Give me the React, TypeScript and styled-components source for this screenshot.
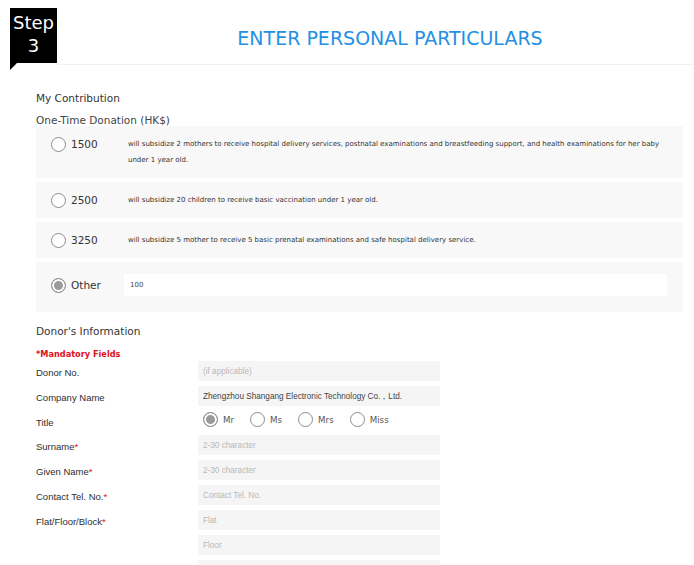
import React from 'react';
import styled, { createGlobalStyle } from 'styled-components';

interface DonationOption {
  amount: string;
  text: string;
}

const options: DonationOption[] = [
  {
    amount: '1500',
    text: 'will subsidize 2 mothers to receive hospital delivery services, postnatal examinations and breastfeeding support, and health examinations for her baby under 1 year old.',
  },
  {
    amount: '2500',
    text: 'will subsidize 20 children to receive basic vaccination under 1 year old.',
  },
  {
    amount: '3250',
    text: 'will subsidize 5 mother to receive 5 basic prenatal examinations and safe hospital delivery service.',
  },
];

interface Field {
  label?: string;
  required?: boolean;
  placeholder?: string;
  value?: string;
}

const fieldsBefore: Field[] = [
  { label: 'Donor No.', placeholder: '(if applicable)' },
  { label: 'Company Name', value: 'Zhengzhou Shangang Electronic Technology Co.，Ltd.' },
];

const fieldsAfter: Field[] = [
  { label: 'Surname', required: true, placeholder: '2-30 character' },
  { label: 'Given Name', required: true, placeholder: '2-30 character' },
  { label: 'Contact Tel. No.', required: true, placeholder: 'Contact Tel. No.' },
  { label: 'Flat/Floor/Block', required: true, placeholder: 'Flat' },
  { placeholder: 'Floor' },
  { placeholder: 'Block' },
];

const titles = ['Mr', 'Ms', 'Mrs', 'Miss'];

const App: React.FC = () => {
  const renderField = (f: Field, i: number) => (
    <React.Fragment key={`${f.label}-${i}`}>
      <Label>
        {f.label}
        {f.required && <Star>*</Star>}
      </Label>
      <TextInput placeholder={f.placeholder} defaultValue={f.value} />
    </React.Fragment>
  );

  return (
    <Page>
      <GlobalStyle />
      <Header>
        <StepBadge>
          Step
          <br />3
        </StepBadge>
        <TitleBar>
          <PageTitle>ENTER PERSONAL PARTICULARS</PageTitle>
        </TitleBar>
      </Header>

      <Content>
        <SectionHeading>My Contribution</SectionHeading>
        <SubHeading>One-Time Donation (HK$)</SubHeading>

        <OptionList>
          {options.map((o) => (
            <OptionRow key={o.amount}>
              <OptionLabel>
                <Radio type="radio" name="amount" />
                <Amount>{o.amount}</Amount>
              </OptionLabel>
              <OptionText>{o.text}</OptionText>
            </OptionRow>
          ))}
          <OptionRow $other>
            <OptionLabel $narrow>
              <Radio type="radio" name="amount" defaultChecked />
              <Amount>Other</Amount>
            </OptionLabel>
            <OtherInput defaultValue="100" />
          </OptionRow>
        </OptionList>

        <SectionHeading $gap={12}>Donor's Information</SectionHeading>
        <Mandatory>*Mandatory Fields</Mandatory>

        <FormGrid>
          {fieldsBefore.map(renderField)}
          <Label>Title</Label>
          <TitleGroup>
            {titles.map((t, i) => (
              <TitleOption key={t}>
                <Radio type="radio" name="title" defaultChecked={i === 0} />
                {t}
              </TitleOption>
            ))}
          </TitleGroup>
          {fieldsAfter.map(renderField)}
        </FormGrid>
      </Content>
    </Page>
  );
};

const GlobalStyle = createGlobalStyle`
  body {
    margin: 0;
    background: #fff;
    font-family: "DejaVu Sans", Verdana, sans-serif;
  }
`;

const Page = styled.div`
  width: 694px;
  height: 565px;
  overflow: hidden;
`;

const Header = styled.div`
  display: flex;
  align-items: flex-start;
`;

const StepBadge = styled.div`
  position: relative;
  margin: 8px 0 0 10px;
  width: 47px;
  height: 55px;
  box-sizing: border-box;
  padding-top: 3px;
  background: #000;
  color: #fff;
  font-size: 18px;
  line-height: 23px;
  text-align: center;

  &::after {
    content: '';
    position: absolute;
    left: 0;
    top: 100%;
    width: 0;
    height: 0;
    border-top: 7px solid #000;
    border-right: 7px solid transparent;
  }
`;

const TitleBar = styled.div`
  flex: 1;
  height: 65px;
  border-bottom: 1px solid #f1f1f1;
  display: flex;
  align-items: center;
  justify-content: center;
  padding: 12px 0 0 29px;
  box-sizing: border-box;
`;

const PageTitle = styled.h1`
  margin: 0;
  font-size: 19px;
  font-weight: normal;
  color: #2490e4;
`;

const Content = styled.div`
  padding: 0 11px 0 36px;
`;

const SectionHeading = styled.div<{ $gap?: number }>`
  margin-top: ${(p) => p.$gap ?? 26}px;
  font-size: 10.5px;
  line-height: 14px;
  color: #333;
`;

const SubHeading = styled.div`
  margin-top: 9px;
  font-size: 10.5px;
  line-height: 12px;
  color: #444;
`;

const OptionList = styled.div`
  display: flex;
  flex-direction: column;
  gap: 4px;
`;

const OptionRow = styled.div<{ $other?: boolean }>`
  display: flex;
  align-items: ${(p) => (p.$other ? 'center' : 'flex-start')};
  padding: ${(p) => (p.$other ? '12px 16px 16px 15px' : '10px 10px 10px 15px')};
  background: #f8f8f8;
`;

const OptionLabel = styled.label<{ $narrow?: boolean }>`
  display: flex;
  align-items: center;
  flex: none;
  width: ${(p) => (p.$narrow ? 73 : 77)}px;
  height: 16px;
`;

const Radio = styled.input`
  appearance: none;
  flex: none;
  width: 15px;
  height: 15px;
  margin: 0 5px 0 0;
  border: 1.5px solid #8c8c8c;
  border-radius: 50%;
  background: #fff;
  box-sizing: border-box;

  &:checked {
    background: #9a9a9a;
    box-shadow: inset 0 0 0 2px #fff;
  }
`;

const Amount = styled.span`
  font-size: 10.5px;
  color: #333;
`;

const OptionText = styled.div`
  flex: 1;
  font-size: 7px;
  line-height: 16px;
  color: #333;
`;

const OtherInput = styled.input`
  flex: 1;
  height: 22px;
  border: none;
  border-radius: 2px;
  background: #fff;
  padding: 0 6px;
  font-family: "DejaVu Sans", sans-serif;
  font-size: 7px;
  color: #444;
  outline: none;
`;

const Mandatory = styled.div`
  margin-top: 10px;
  font-size: 8.2px;
  line-height: 12px;
  font-weight: bold;
  color: #e0111a;
`;

const FormGrid = styled.div`
  display: grid;
  grid-template-columns: 162px 242px;
  row-gap: 5px;
  margin-top: 1px;
`;

const Label = styled.div`
  padding-top: 5px;
  font-family: "Liberation Sans", Arial, sans-serif;
  font-size: 9.5px;
  line-height: 14px;
  color: #2e2e2e;
`;

const Star = styled.span`
  color: #e0111a;
`;

const TextInput = styled.input`
  height: 20px;
  border: none;
  background: #f5f5f5;
  padding: 0 5px;
  box-sizing: border-box;
  font-family: "Liberation Sans", Arial, sans-serif;
  font-size: 8.2px;
  color: #444;
  outline: none;

  &::placeholder {
    color: #b8b8b8;
  }
`;

const TitleGroup = styled.div`
  display: flex;
  align-items: center;
  height: 17px;
  padding-left: 5px;
`;

const TitleOption = styled.label`
  display: flex;
  align-items: center;
  margin-right: 16px;
  font-size: 8.7px;
  color: #555;
`;

export default App;
